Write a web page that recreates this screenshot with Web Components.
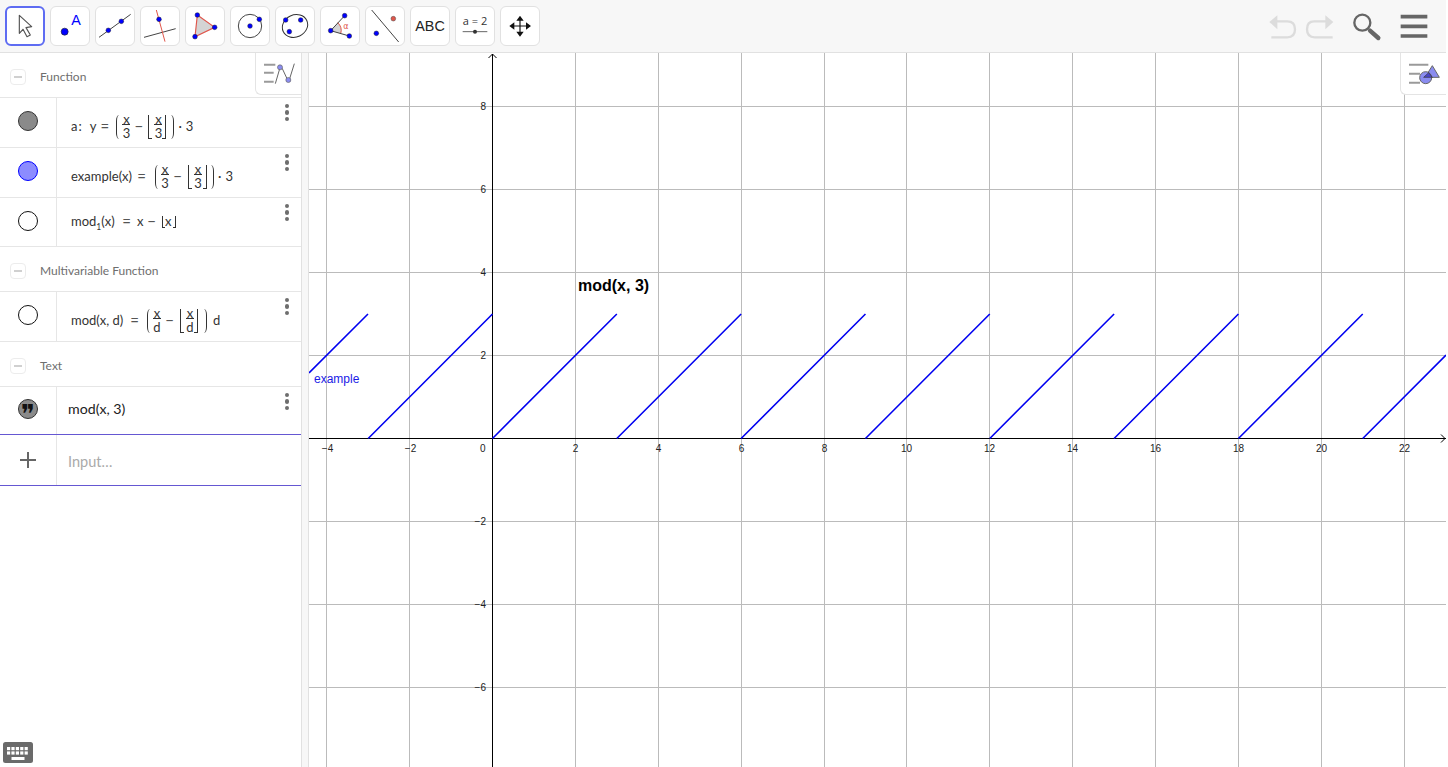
<!DOCTYPE html>
<html><head><meta charset="utf-8"><title>GeoGebra</title>
<style>
html,body{margin:0;padding:0;background:#fff;height:100%;overflow:hidden}
body{font-family:"Open Sans","Liberation Sans",sans-serif}
</style></head>
<body>
<gg-app>
 <gg-toolbar slot="top">
  <gg-tool selected><svg viewBox="0 0 120 120"><path d="M43 28L80 62L63 65L76 87L66 92L54 70L43 82Z" fill="#fff" stroke="#555" stroke-width="3.5" stroke-linejoin="round"/></svg></gg-tool>
  <gg-tool><svg viewBox="0 0 120 120"><circle cx="44" cy="77" r="10.5" fill="#00f" stroke="#223" stroke-width="2"/><text x="78" y="57" text-anchor="middle" font-family="Liberation Sans" font-size="43" fill="#00f">A</text></svg></gg-tool>
  <gg-tool><svg viewBox="0 0 120 120"><line x1="12" y1="94" x2="107" y2="25" stroke="#444" stroke-width="3"/><circle cx="40" cy="73" r="7" fill="#00f" stroke="#223" stroke-width="1.5"/><circle cx="79" cy="46" r="7" fill="#00f" stroke="#223" stroke-width="1.5"/></svg></gg-tool>
  <gg-tool><svg viewBox="0 0 120 120"><line x1="12" y1="94" x2="107" y2="68" stroke="#444" stroke-width="3"/><line x1="49" y1="12" x2="75" y2="107" stroke="#e0564b" stroke-width="3"/><circle cx="57" cy="40" r="7" fill="#00f" stroke="#223" stroke-width="1.5"/></svg></gg-tool>
  <gg-tool><svg viewBox="0 0 120 120"><path d="M37 27L89 64L30 92Z" fill="#d4d4d4" stroke="#e0564b" stroke-width="3.5"/><circle cx="37" cy="27" r="7" fill="#00f" stroke="#223" stroke-width="1.5"/><circle cx="89" cy="64" r="7" fill="#00f" stroke="#223" stroke-width="1.5"/><circle cx="30" cy="92" r="7" fill="#00f" stroke="#223" stroke-width="1.5"/></svg></gg-tool>
  <gg-tool><svg viewBox="0 0 120 120"><circle cx="60" cy="60" r="35" fill="none" stroke="#444" stroke-width="3"/><circle cx="60" cy="60" r="7" fill="#00f" stroke="#223" stroke-width="1.5"/><circle cx="88" cy="40" r="7" fill="#00f" stroke="#223" stroke-width="1.5"/></svg></gg-tool>
  <gg-tool><svg viewBox="0 0 120 120"><ellipse cx="60" cy="60" rx="39" ry="33" transform="rotate(-25 60 60)" fill="none" stroke="#333" stroke-width="3"/><circle cx="32" cy="42" r="7" fill="#00f" stroke="#223" stroke-width="1.5"/><circle cx="77" cy="42" r="7" fill="#00f" stroke="#223" stroke-width="1.5"/><circle cx="43" cy="77" r="7" fill="#00f" stroke="#223" stroke-width="1.5"/></svg></gg-tool>
  <gg-tool><svg viewBox="0 0 120 120"><path d="M32 74L53 50A32 32 0 0 1 62 83Z" fill="#d4d4d4"/><path d="M53 50A32 32 0 0 1 62 83" fill="none" stroke="#e0564b" stroke-width="3"/><line x1="32" y1="74" x2="74" y2="29" stroke="#444" stroke-width="3"/><line x1="32" y1="74" x2="88" y2="90" stroke="#444" stroke-width="3"/><circle cx="74" cy="29" r="7" fill="#00f" stroke="#223" stroke-width="1.5"/><circle cx="32" cy="74" r="7" fill="#00f" stroke="#223" stroke-width="1.5"/><circle cx="88" cy="90" r="7" fill="#00f" stroke="#223" stroke-width="1.5"/><text x="78" y="69" text-anchor="middle" font-family="DejaVu Sans" font-size="24" fill="#e0564b">α</text></svg></gg-tool>
  <gg-tool><svg viewBox="0 0 120 120"><line x1="20" y1="12" x2="101" y2="108" stroke="#444" stroke-width="3"/><circle cx="34" cy="82" r="7" fill="#00f" stroke="#223" stroke-width="1.5"/><circle cx="85" cy="38" r="7" fill="#e0564b" stroke="#444" stroke-width="1.5"/></svg></gg-tool>
  <gg-tool><svg viewBox="0 0 120 120"><text x="60" y="75" text-anchor="middle" font-family="Liberation Sans" font-size="43" fill="#222">ABC</text></svg></gg-tool>
  <gg-tool><svg viewBox="0 0 120 120"><text x="60" y="57" text-anchor="middle" font-family="Open Sans" font-size="33" fill="#333">a = 2</text><line x1="23" y1="77" x2="97" y2="77" stroke="#666" stroke-width="3"/><circle cx="60" cy="77" r="6" fill="#333"/></svg></gg-tool>
  <gg-tool><svg viewBox="0 0 120 120"><path d="M60 40V81M40 60H81" stroke="#111" stroke-width="3.5"/><path d="M60 29L71 44H49ZM60 92L71 77H49ZM28 60L43 49V71ZM93 60L78 49V71Z" fill="#111"/></svg></gg-tool>
  <gg-actions slot="end"></gg-actions>
 </gg-toolbar>
 <gg-panel slot="left">
  <gg-group>Function</gg-group>
  <gg-row h="50" kind="grey"><m-row down="4">
    <m-t>a</m-t><m-t style="margin-left:1px">:</m-t><m-t style="margin-left:8px">y</m-t><m-t op style="margin-left:4px">=</m-t>
    <m-paren style="margin-left:7px"></m-paren><m-frac><span>x</span><span>3</span></m-frac><m-t op style="margin-left:4px">−</m-t>
    <m-floor style="margin-left:5px"></m-floor><m-frac style="margin-left:2px"><span>x</span><span>3</span></m-frac><m-floor right></m-floor><m-paren right style="margin-left:2px"></m-paren>
    <m-t style="margin-left:4px">·</m-t><m-t style="margin-left:4px">3</m-t></m-row></gg-row>
  <gg-row h="50" kind="blue"><m-row down="4">
    <m-t style="width:59px">example(x)</m-t><m-t op style="margin-left:7px">=</m-t>
    <m-paren style="margin-left:9px"></m-paren><m-frac><span>x</span><span>3</span></m-frac><m-t op style="margin-left:4px">−</m-t>
    <m-floor style="margin-left:6px"></m-floor><m-frac style="margin-left:2px"><span>x</span><span>3</span></m-frac><m-floor right style="margin-left:1px"></m-floor><m-paren right style="margin-left:1px"></m-paren>
    <m-t style="margin-left:4px">·</m-t><m-t style="margin-left:4px">3</m-t></m-row></gg-row>
  <gg-row h="49" kind="white"><m-row>
    <m-t style="width:43px">mod<sub style="font-size:8.5px;line-height:0">1</sub>(x)</m-t><m-t op style="margin-left:8px">=</m-t><m-t style="margin-left:6px;width:7px">x</m-t><m-t op style="margin-left:3px">−</m-t>
    <m-floor small style="margin-left:6px"></m-floor><m-t style="width:7px">x</m-t><m-floor small right style="margin-left:1px"></m-floor></m-row></gg-row>
  <gg-group>Multivariable Function</gg-group>
  <gg-row h="50" kind="white"><m-row down="4">
    <m-t style="width:52px">mod(x, d)</m-t><m-t op style="margin-left:7px">=</m-t>
    <m-paren style="margin-left:8px"></m-paren><m-frac><span>x</span><span>d</span></m-frac><m-t op style="margin-left:4px">−</m-t>
    <m-floor style="margin-left:6px"></m-floor><m-frac style="margin-left:2px"><span>x</span><span>d</span></m-frac><m-floor right></m-floor><m-paren right style="margin-left:3px"></m-paren>
    <m-t style="margin-left:6px">d</m-t></m-row></gg-row>
  <gg-group>Text</gg-group>
  <gg-row h="48" kind="text" active plain><span style="font:14.2px Lato,sans-serif;margin-bottom:5px">mod(x, 3)</span></gg-row>
  <gg-row h="51" kind="plus" active plain nomenu><span style="color:#aaa;margin-top:2px;font:14.5px Lato,sans-serif">Input…</span></gg-row>
  <gg-toggle side="left" slot="overlay"><svg viewBox="15 9 138 126"><path d="M42 44H76M42 68H71M42 95H71" stroke="#9a9a9a" stroke-width="6"/><path d="M76 101L90 53Q93 48 97 56L111 86Q115 94 119 86L133 41" fill="none" stroke="#666" stroke-width="3"/><circle cx="90" cy="52" r="7.5" fill="#8a8cf0" stroke="#666" stroke-width="2"/><circle cx="115" cy="90" r="7.5" fill="#8a8cf0" stroke="#666" stroke-width="2"/></svg></gg-toggle>
  <gg-keyboard slot="overlay"></gg-keyboard>
 </gg-panel>
 <gg-splitter slot="split"></gg-splitter>
 <gg-graph slot="graph">
  <gg-toggle side="right"><svg viewBox="450 159 138 126"><path d="M477 194H535M477 221H510M477 248H510" stroke="#9a9a9a" stroke-width="6"/><path d="M547 197L568 232H525Z" fill="#8a8cf0" stroke="#666" stroke-width="3"/><circle cx="527" cy="233" r="18" fill="#8a8cf0" stroke="#666" stroke-width="3"/><path d="M536 218L547 232H521Z" fill="#4a46c8" stroke="#333" stroke-width="2"/></svg></gg-toggle>
 </gg-graph>
</gg-app>
<script>
function def(name, css, html, init){
  customElements.define(name, class extends HTMLElement{
    connectedCallback(){
      if(this.shadowRoot) return;
      const r=this.attachShadow({mode:'open'});
      r.innerHTML='<style>'+css+'</style>'+(typeof html==='function'?html(this):html);
      if(init) init(this,r);
    }
  });
}
def('gg-app',
 ':host{display:grid;width:1446px;height:767px;grid-template-columns:301px 8px 1fr;grid-template-rows:53px 714px;overflow:hidden}'
 +'.t{grid-column:1/4}',
 '<div class="t"><slot name="top"></slot></div><slot name="left"></slot><slot name="split"></slot><slot name="graph"></slot>');
def('gg-toolbar',
 ':host{display:flex;box-sizing:border-box;height:53px;background:#f7f7f7;border-bottom:1px solid #e1e1e1;padding:6px 0 0 5px;gap:5px}'
 +'::slotted([slot=end]){margin-left:auto}',
 '<slot></slot><slot name="end"></slot>');
def('gg-tool',
 ':host{display:block;box-sizing:border-box;width:40px;height:40px;background:#fff;border:1px solid #e1e1e1;border-radius:6px;overflow:hidden}'
 +':host([selected]){border:2px solid #5e6cf2}'
 +'.i{display:block;width:40px;height:40px;margin:-1px}:host([selected]) .i{margin:-2px}'
 +'::slotted(svg){display:block;width:40px;height:40px}',
 '<div class="i"><slot></slot></div>');
def('gg-actions',
 ':host{display:block;width:196px;height:46px;margin-top:-6px}svg{display:block}',
 '<svg width="196" height="52" viewBox="0 0 588 156"><g fill="none" stroke="#dcdcdc" stroke-width="7">'
 +'<path d="M78 64H112Q135 64 135 88Q135 112 112 112H64"/><path d="M232 64H192Q171 64 171 88Q171 112 194 112H248" /></g>'
 +'<path d="M58 66L82 46V88ZM250 66L226 46V88Z" fill="#dcdcdc"/>'
 +'<circle cx="337" cy="68" r="24" fill="none" stroke="#666" stroke-width="7"/><path d="M360 92L385 114" stroke="#666" stroke-width="13" stroke-linecap="round"/>'
 +'<path d="M452 50H532M452 79H532M452 108H532" stroke="#666" stroke-width="11"/></svg>');
def('gg-panel',
 ':host{display:block;position:relative;height:714px;background:#fff;overflow:hidden}',
 '<slot></slot><slot name="overlay"></slot>');
def('gg-group',
 ':host{display:flex;align-items:center;box-sizing:border-box;height:45px;border-bottom:1px solid #e6e6e6;padding:3px 0 0 10px;font:12px Lato,sans-serif;color:#6e6e6e}'
 +'.m{box-sizing:border-box;width:16px;height:16px;border:1px solid #ececec;border-radius:4px;margin-right:14px;display:flex;align-items:center;justify-content:center}'
 +'.m i{display:block;width:8px;height:2px;background:#d0d0d0}',
 '<span class="m"><i></i></span><slot></slot>');
def('gg-row',
 ':host{display:flex;box-sizing:border-box;border-bottom:1px solid #e6e6e6;font:13px Lato,sans-serif;color:#222}'
 +':host([active]){border-bottom-color:#6557d2}'
 +'.a{flex:none;box-sizing:border-box;width:57px;border-right:1px solid #e6e6e6;display:flex;align-items:center;justify-content:center}'
 +'.b{flex:1;min-width:0;display:flex;align-items:center;padding-left:14px}:host([plain]) .b{padding-left:11px}'
 +'.k{flex:none;width:29px;display:flex;flex-direction:column;align-items:flex-start;padding:6px 0 0 13px;box-sizing:border-box;gap:2.2px}'
 +'.k i{display:block;width:4.2px;height:4.2px;border-radius:50%;background:#6e6e6e}'
 +'.c{box-sizing:border-box;width:20px;height:20px;border-radius:50%;border:1px solid #111;margin-bottom:3px;display:flex;align-items:center;justify-content:center}'
 +'.grey{background:#8a8a8a;border-color:#333}.blue{background:#8c8cff;border-color:#00f}.white{background:#fff}'
 +'.text{background:#8a8a8a;border-color:#333;font:26px/1 "DejaVu Sans",sans-serif;color:#111}.text span{display:block;margin-top:10px}'
 +'.p{position:relative;width:16px;height:16px;margin-bottom:1px}.p:before,.p:after{content:"";position:absolute;background:#666}.p:before{left:0;right:0;top:7px;height:2px}.p:after{top:0;bottom:0;left:7px;width:2px}',
 h=>{
  const k=h.getAttribute('kind');
  const ic=k==='plus'?'<div class="p"></div>':k==='text'?'<div class="c text"><span>❞</span></div>':'<div class="c '+k+'"></div>';
  const menu=h.hasAttribute('nomenu')?'':'<div class="k"><i></i><i></i><i></i></div>';
  return '<div class="a">'+ic+'</div><div class="b"><slot></slot></div>'+menu;
 },
 h=>{h.style.height=h.getAttribute('h')+'px';});
def('m-row',
 ':host{display:flex;align-items:center;font:13px Lato,sans-serif;color:#333;white-space:nowrap}',
 '<slot></slot>',h=>{const d=h.getAttribute('down');if(d)h.style.paddingTop=(+d*2)+'px';});
def('m-t',':host{display:block;line-height:14px;margin-bottom:2px}:host([op]){font-size:15px;color:#555;width:9px;text-align:center}','<slot></slot>');
def('m-frac',
 ':host{display:flex;flex-direction:column;align-items:stretch;text-align:center;width:8px;line-height:11px}'
 +'::slotted(span:first-child){border-bottom:1px solid #333;line-height:10px}::slotted(span:last-child){padding-top:3px}',
 '<slot></slot>');
def('m-paren',
 ':host{display:block;box-sizing:border-box;width:6px;height:24px;border-left:1.2px solid #333;border-radius:100%/50%}'
 +':host([right]){border-left:0;border-right:1.2px solid #333}','');
def('m-floor',
 ':host{display:block;box-sizing:border-box;width:4px;height:24px;border-left:1px solid #333;border-bottom:1px solid #333}'
 +':host([right]){border-left:0;border-right:1px solid #333}'
 +':host([small]){height:12px;width:3px}','');
def('gg-splitter',':host{display:block;box-sizing:border-box;height:714px;background:#f7f7f7;border-left:1px solid #e1e1e1;border-right:1px solid #e1e1e1}','');
def('gg-toggle',
 ':host{display:block;position:absolute;top:0;right:0;box-sizing:border-box;width:46px;height:42px;background:#fff;border-left:1px solid #e4e4e4;border-bottom:1px solid #e4e4e4;border-bottom-left-radius:6px;z-index:2}'
 +'::slotted(svg){display:block;width:46px;height:42px;margin:0 0 -1px -1px}',
 '<slot></slot>');
def('gg-keyboard',
 ':host{display:block;position:absolute;left:3px;bottom:4px;width:30px;height:21px}svg{display:block}',
 ()=>{
  let s='<svg width="30" height="21" viewBox="0 0 30 21"><rect width="30" height="21" rx="2.5" fill="#6a6a6a"/>';
  for(let j=0;j<2;j++)for(let i=0;i<5;i++)s+='<rect x="'+(4+i*4.4)+'" y="'+(5+j*4.4)+'" width="3.2" height="3.2" fill="#fff"/>';
  return s+'<rect x="8.5" y="15" width="13" height="3" fill="#fff"/></svg>';
 });
def('gg-graph',
 ':host{display:block;position:relative;height:714px;background:#fff;overflow:hidden}svg{display:block;position:absolute;left:0;top:0}'
 +'text{font-family:"Liberation Sans",sans-serif}',
 ()=>{
  const X0=492,Y0=438.5,U=41.44,UY=41.5;
  let s='<svg width="1137" height="714" viewBox="309 53 1137 714">';
  const px=v=>Math.round(X0+v*U)+.5, py=v=>Math.floor(Y0-v*UY)+.5;
  for(let v=-4;v<=22;v+=2){if(v===0)continue;s+='<line x1="'+px(v)+'" x2="'+px(v)+'" y1="53" y2="767" stroke="#bbb" stroke-width="1"/>';}
  for(let v=-6;v<=8;v+=2){if(v===0)continue;s+='<line y1="'+py(v)+'" y2="'+py(v)+'" x1="309" x2="1446" stroke="#bbb"/>';}
  s+='<line x1="492.5" x2="492.5" y1="54" y2="767" stroke="#000"/><line x1="309" x2="1446" y1="438.5" y2="438.5" stroke="#000"/>';
  s+='<path d="M488.5 58L492.5 54L496.5 58M1441 434.5L1445 438.5L1441 442.5" fill="none" stroke="#000"/>';
  const T=(x,y,t,a)=>'<text x="'+x+'" y="'+y+'" font-size="10" fill="#222" text-anchor="'+(a||'middle')+'">'+t+'</text>';
  for(let v=-4;v<=22;v+=2){if(v===0)continue;s+=T(px(v)+(v<0?1:0),452,v<0?'−'+(-v):v);}
  s+=T(485.5,452,'0','end');
  for(let v=-6;v<=8;v+=2){if(v===0)continue;s+=T(486,py(v)+3.5,v<0?'−'+(-v):v,'end');}
  const O=492.5;
  let d='M309 373L368 314';
  for(let k=-1;k<7;k++){const a=O+3*k*U;d+='M'+a+' 438.5L'+(a+3*U)+' 314';}
  d+='M'+(O+21*U)+' 438.5L1446 355';
  s+='<path d="'+d+'" fill="none" stroke="#0000f0" stroke-width="1.6"/>';
  s+='<text x="578" y="291" font-size="16" font-weight="bold" fill="#000">mod(x, 3)</text>';
  s+='<text x="314" y="383" font-size="12" fill="#1a1ae6">example</text>';
  return s+'</svg><slot></slot>';
 });
</script>
</body></html>
